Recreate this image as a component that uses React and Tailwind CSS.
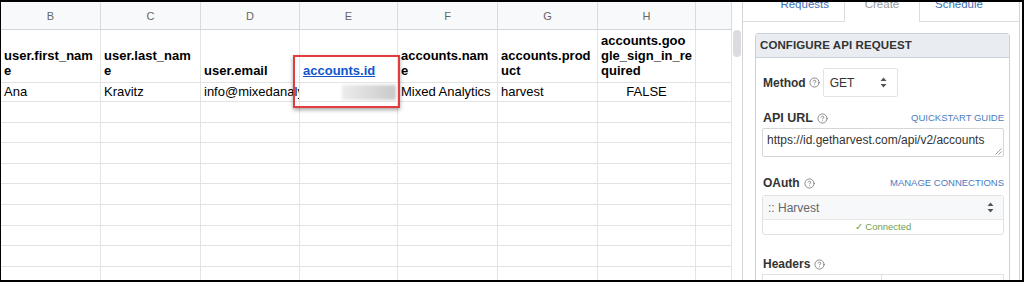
import React from "react";
import { CircleHelp } from "lucide-react";

const cols = [
  { w: "w-[100px]", letter: "B", head: ["user.first_nam", "e"], val: "Ana" },
  { w: "w-[100px]", letter: "C", head: ["user.last_nam", "e"], val: "Kravitz" },
  { w: "w-[99px]", letter: "D", head: ["user.email"], val: "info@mixedanalytics.com" },
  { w: "w-[98px]", letter: "E", head: ["accounts.id"], link: true, blur: true },
  { w: "w-[100px]", letter: "F", head: ["accounts.nam", "e"], val: "Mixed Analytics" },
  { w: "w-[100px]", letter: "G", head: ["accounts.prod", "uct"], val: "harvest" },
  { w: "w-[98px]", letter: "H", head: ["accounts.goo", "gle_sign_in_re", "quired"], val: "FALSE", center: true },
  { w: "w-[36px]", letter: "", head: [], val: "" },
];

const emptyRows = Array.from({ length: 9 });

const Help = () => (
  <CircleHelp size={11} strokeWidth={1.6} className="text-[#666] shrink-0" />
);

const Arrows = () => (
  <svg width="7" height="11" viewBox="0 0 7 11" className="shrink-0">
    <path d="M3.5 0.5 L6.5 4 L0.5 4 Z" fill="#555" />
    <path d="M3.5 10.5 L6.5 7 L0.5 7 Z" fill="#555" />
  </svg>
);

const Sheet = () => {
  return (
    <div className="relative flex w-[741px] shrink-0 bg-white">
      <div className="w-[731px] flex flex-col">
        {/* column letters */}
        <div className="flex h-[28px] shrink-0 bg-[#f8f9fa] border-b border-[#d3d5d8]">
          {cols.map((c, i) => (
            <div
              key={i}
              className={`${c.w} shrink-0 border-r border-[#d9dbde] flex items-center justify-center pt-[2px] text-[11px] text-[#666]`}
            >
              {c.letter}
            </div>
          ))}
        </div>
        {/* header row */}
        <div className="flex h-[53px] shrink-0 border-b border-[#e2e3e3]">
          {cols.map((c, i) => (
            <div
              key={i}
              className={`${c.w} shrink-0 border-r border-[#e2e3e3] flex flex-col justify-end px-[3px] pb-[4px] text-[13px] leading-[15px] font-bold text-black whitespace-nowrap overflow-visible`}
            >
              {c.head.map((line, j) =>
                c.link ? (
                  <span key={j} className="text-[#1155cc] underline">
                    {line}
                  </span>
                ) : (
                  <span key={j}>{line}</span>
                )
              )}
            </div>
          ))}
        </div>
        {/* data row */}
        <div className="flex h-[19px] shrink-0 border-b border-[#e2e3e3]">
          {cols.map((c, i) => (
            <div
              key={i}
              className={`${c.w} shrink-0 border-r border-[#e2e3e3] flex items-center px-[3px] text-[13px] leading-[18px] text-black whitespace-nowrap overflow-hidden ${
                c.center ? "justify-center" : ""
              } ${c.blur ? "justify-end pr-[1px]" : ""}`}
            >
              {c.blur ? (
                <div className="w-[54px] h-[15px] bg-gradient-to-r from-[#ececec] to-[#c9c9c9] blur-[1.5px]" />
              ) : (
                c.val
              )}
            </div>
          ))}
        </div>
        {emptyRows.map((_, r) => (
          <div key={r} className="flex h-[20.6px] shrink-0 border-b border-[#e2e3e3]">
            {cols.map((c, i) => (
              <div key={i} className={`${c.w} shrink-0 border-r border-[#e2e3e3]`} />
            ))}
          </div>
        ))}
      </div>
      {/* vertical scrollbar */}
      <div className="w-[10px] shrink-0 pt-[28px] pl-[1px]">
        <div className="w-[8px] h-[27px] rounded-full bg-[#dadce0]" />
      </div>

      {/* highlight around accounts.id */}
      <div className="absolute left-[292px] top-[53px] w-[107px] h-[53px] border-2 border-[#e23c3f] shadow-[0_2px_4px_rgba(0,0,0,0.35)]" />
    </div>
  );
};

const Panel = () => {
  return (
    <div className="w-[278px] shrink-0 bg-white border-l border-r border-[#d4d4d4] flex flex-col text-[#333]">
      {/* tabs */}
      <div className="flex h-[20px] shrink-0 text-[11.5px] leading-[13px]">
        <div className="w-[101px] shrink-0 border-b border-[#ddd] flex items-end justify-end pr-[15px] pb-[10px] text-[#3c6fb4]">
          Requests
        </div>
        <div className="w-[76px] shrink-0 border-l border-r border-[#ddd] flex items-end justify-center pb-[11px] text-[#999]">
          Create
        </div>
        <div className="flex-1 border-b border-[#ddd] flex items-end pl-[15px] pb-[10px] text-[#3c6fb4]">
          Schedule
        </div>
      </div>

      {/* configure box */}
      <div className="ml-[12px] mr-[9px] mt-[11px] border border-[#c8d0d9] rounded-t-[3px] flex-1">
        <div className="h-[24px] bg-[#e9edf2] border-b border-[#c8d0d9] flex items-center pl-[4px] text-[11.5px] font-bold text-[#333] tracking-[0.1px]">
          CONFIGURE API REQUEST
        </div>
        <div className="pl-[6px] pr-[5px] pt-[10px] flex flex-col">
          <div className="flex items-center pl-[1px]">
            <span className="text-[12px] font-bold mr-[3px]">Method</span>
            <Help />
            <div className="ml-[3px] w-[75px] h-[29px] border border-[#e3e3e3] rounded-[2px] bg-white flex items-center justify-between pl-[6px] pr-[10px] text-[12px] text-[#333]">
              GET
              <Arrows />
            </div>
          </div>

          <div className="mt-[13px] h-[16px] flex items-center justify-between pl-[1px]">
            <div className="flex items-center gap-[4px]">
              <span className="text-[12.5px] font-bold">API URL</span>
              <Help />
            </div>
            <span className="text-[9.5px] text-[#4a7cc0]">QUICKSTART GUIDE</span>
          </div>
          <div className="relative mt-[2px] h-[29px] border border-[#d6d6d6] rounded-[2px] pl-[4px] pt-[4px] text-[12px] leading-[14px] text-[#333]">
            https://id.getharvest.com/api/v2/accounts
            <svg width="7" height="7" viewBox="0 0 7 7" className="absolute right-[1px] bottom-[1px]">
              <path d="M6.5 0.5 L0.5 6.5 M6.5 3.5 L3.5 6.5" stroke="#888" strokeWidth="0.8" />
            </svg>
          </div>

          <div className="mt-[18px] h-[16px] flex items-center justify-between pl-[1px]">
            <div className="flex items-center gap-[4px]">
              <span className="text-[12px] font-bold">OAuth</span>
              <Help />
            </div>
            <span className="text-[9.5px] text-[#4a7cc0]">MANAGE CONNECTIONS</span>
          </div>
          <div className="mt-[4px] border border-[#e1e1e1] rounded-[3px]">
            <div className="h-[24px] bg-[#f7f8fa] border-b border-[#e6e6e6] flex items-center justify-between pl-[5px] pr-[9px] text-[12px] text-[#666]">
              :: Harvest
              <Arrows />
            </div>
            <div className="h-[14px] flex items-center justify-center text-[9.5px] text-[#6e9f52]">
              ✓ Connected
            </div>
          </div>

          <div className="mt-[21px] h-[16px] flex items-center gap-[4px] pl-[1px]">
            <span className="text-[12px] font-bold">Headers</span>
            <Help />
          </div>
          <div className="mt-[2px] flex h-[20px]">
            <div className="w-[120px] border border-[#e1e1e1]" />
            <div className="flex-1 border border-l-0 border-[#e1e1e1]" />
          </div>
        </div>
      </div>
    </div>
  );
};

export default function App() {
  return (
    <div
      className="w-[1024px] h-[282px] overflow-hidden bg-black border-black border-t-2 border-l border-r-2 border-b-2"
      style={{ fontFamily: '"Liberation Sans", Arial, sans-serif' }}
    >
      <div className="flex h-full bg-white overflow-hidden">
        <Sheet />
        <Panel />
        <div className="flex-1 bg-white" />
      </div>
    </div>
  );
}
